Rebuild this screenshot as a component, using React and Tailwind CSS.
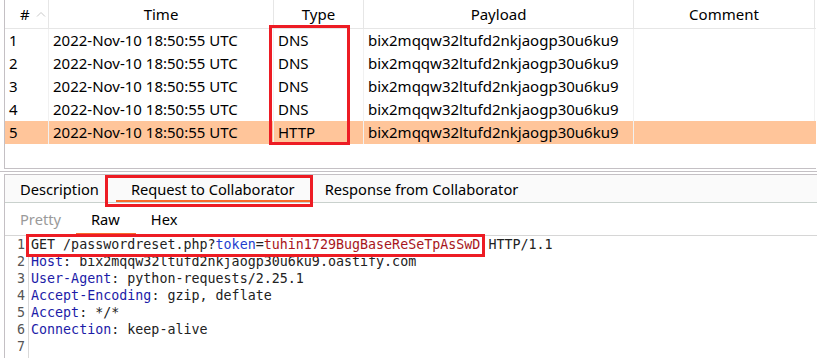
import React from "react";

const rows = [1, 2, 3, 4, 5];

function Cell({ w, children, className = "" }) {
  return (
    <div className={`shrink-0 flex items-center pl-[4px] border-r border-[#f1f1f1] ${w} ${className}`}>
      {children}
    </div>
  );
}

export default function App() {
  const ui = { fontFamily: '"Noto Sans", "Open Sans", sans-serif' };
  const mono = { fontFamily: '"DejaVu Sans Mono", "Liberation Mono", monospace' };
  const K = "text-[#1c1ca8]";
  return (
    <div className="relative w-[817px] h-[358px] bg-white overflow-hidden text-black" style={ui}>
      {/* top table panel */}
      <div className="ml-[4px] w-[812px] h-[169px] border-l border-b border-[#c4c0c4] text-[15px]">
        <div className="flex h-[29px] border-b border-[#e6e6e6]">
          <div className="w-[44px] shrink-0 border-r border-[#e6e6e6] flex items-center pl-[15px] gap-[6px]">
            <span>#</span>
            <svg width="10" height="6" viewBox="0 0 10 6" className="mt-[-1px]">
              <path d="M1 5.5 L5 1.5 L9 5.5" fill="none" stroke="#c8c8c8" strokeWidth="1" />
            </svg>
          </div>
          <div className="w-[225px] shrink-0 border-r border-[#e6e6e6] flex items-center justify-center">Time</div>
          <div className="w-[90px] shrink-0 border-r border-[#e6e6e6] flex items-center justify-center">Type</div>
          <div className="w-[270px] shrink-0 border-r border-[#e6e6e6] flex items-center justify-center">Payload</div>
          <div className="w-[181px] shrink-0 border-r border-[#e6e6e6] flex items-center justify-center">Comment</div>
        </div>
        {rows.map((n) => (
          <div key={n} className={`flex h-[23px] ${n === 5 ? "bg-[#ffc59a]" : ""}`}>
            <Cell w="w-[44px]" className="pl-[3px]">{n}</Cell>
            <Cell w="w-[225px]">2022-Nov-10 18:50:55 UTC</Cell>
            <Cell w="w-[90px]">{n === 5 ? "HTTP" : "DNS"}</Cell>
            <Cell w="w-[270px]">bix2mqqw32ltufd2nkjaogp30u6ku9</Cell>
            <Cell w="w-[181px]" className={n === 5 ? "border-transparent" : ""}></Cell>
          </div>
        ))}
      </div>
      {/* splitter */}
      <div className="h-[2px]" />
      <div className="h-[1px] bg-[#c4c0c4]" />
      <div className="h-[2px]" />
      {/* lower panel */}
      <div className="ml-[4px] h-[200px] border-l border-t border-[#c4c0c4] text-[14.67px]">
        <div className="flex h-[28px] bg-[#fafafa] border-b border-[#c9d1cd]">
          <div className="pl-[15px] pr-[17px] h-[27px] flex items-center">Description</div>
          <div className="px-[15px] h-[27px] flex items-center border-b-2 border-[#f76a2c] pt-[2px]">Request to Collaborator</div>
          <div className="px-[15px] h-[27px] flex items-center">Response from Collaborator</div>
        </div>
        <div className="flex h-[33px] border-b border-[#d6d6d6]">
          <div className="px-[15px] h-[32px] flex items-center text-[#9a9a9a]">Pretty</div>
          <div className="pl-[15px] pr-[16px] h-[32px] flex items-center border-b-2 border-[#f76a2c] pt-[2px]">Raw</div>
          <div className="px-[15px] h-[32px] flex items-center">Hex</div>
        </div>
        <div className="flex text-[13.33px] leading-[17px] text-[#222]" style={mono}>
          <div className="w-[24px] shrink-0 border-r border-[#d9d9d9] text-right pr-[3px] text-[#555] h-[130px]">
            {[1, 2, 3, 4, 5, 6, 7].map((i) => (
              <div key={i}>{i}</div>
            ))}
          </div>
          <div className="pl-[2px] whitespace-pre">
            <div>
              GET /passwordreset.php?<span className="text-[#1f3fcf]">token</span>=
              <span className="text-[#a8161c]">tuhin1729BugBaseReSeTpAsSwD</span> HTTP/1.1
            </div>
            <div>
              <span className={K}>Host</span>: bix2mqqw32ltufd2nkjaogp30u6ku9.oastify.com
            </div>
            <div>
              <span className={K}>User-Agent</span>: python-requests/2.25.1
            </div>
            <div>
              <span className={K}>Accept-Encoding</span>: gzip, deflate
            </div>
            <div>
              <span className={K}>Accept</span>: */*
            </div>
            <div>
              <span className={K}>Connection</span>: keep-alive
            </div>
            <div>&nbsp;</div>
          </div>
        </div>
      </div>
      {/* red annotation boxes */}
      <div className="absolute left-[269px] top-[25px] w-[81px] h-[120px] border-[3px] border-[#ed1c24]" />
      <div className="absolute left-[105px] top-[175px] w-[208px] h-[32px] border-[3px] border-[#ed1c24]" />
      <div className="absolute left-[26px] top-[234px] w-[459px] h-[23px] border-[3px] border-[#ed1c24]" />
    </div>
  );
}
